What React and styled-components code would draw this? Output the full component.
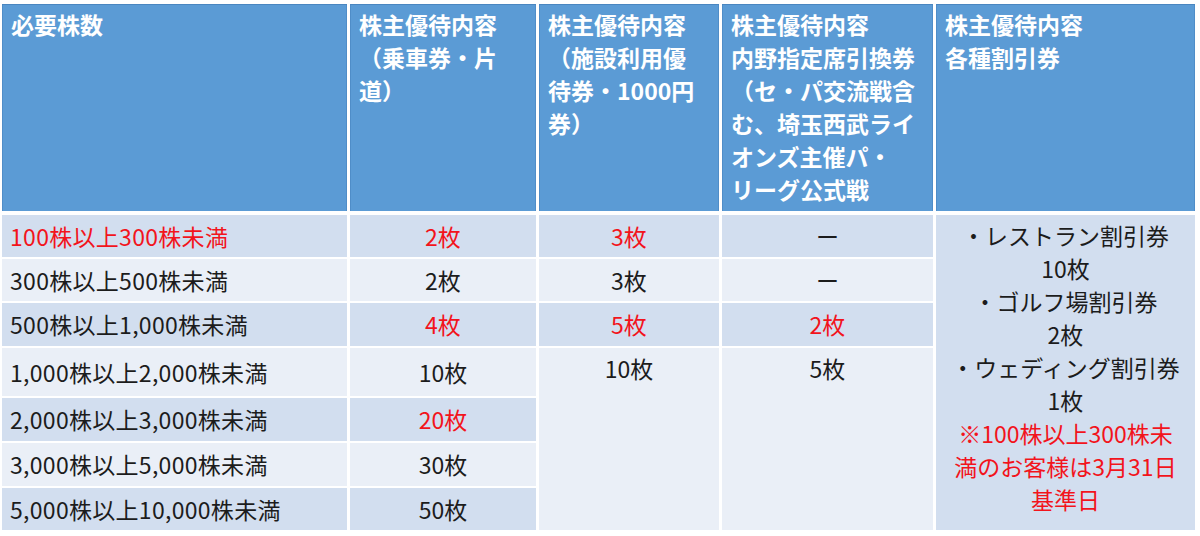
import React from 'react';
import styled, { createGlobalStyle } from 'styled-components';

const GlobalStyle = createGlobalStyle`
  body {
    margin: 0;
    background: #fff;
    font-family: "Noto Sans CJK JP", "Noto Sans", sans-serif;
  }
`;

const COLUMNS = '345px 186px 180px 211px 259px';

const Page = styled.div`
  display: flex;
  flex-direction: column;
  gap: 4px;
  padding: 4px 0 0 2px;
`;

const HeadRow = styled.div`
  display: grid;
  grid-template-columns: ${COLUMNS};
  column-gap: 3px;
  height: 207px;
`;

const HeadCell = styled.div`
  background: #5b9bd5;
  color: #fff;
  font-weight: 700;
  font-size: 23px;
  line-height: 33px;
  padding: 4px 10px 0 9px;
  box-shadow: inset 0 1px 0 #4a86c0, inset 1px 0 0 #4f8dc8, inset -1px 0 0 #4f8dc8;
`;

const Line = styled.span`
  display: block;
  white-space: nowrap;
`;

const Body = styled.div`
  display: grid;
  grid-template-columns: ${COLUMNS};
  grid-template-rows: 42px 42px 43px 48px 43px 43px 42px;
  column-gap: 3px;
  row-gap: 2px;
`;

const Cell = styled.div`
  grid-column: ${(p) => p.$col};
  grid-row: ${(p) => p.$row} / span ${(p) => p.$span || 1};
  background: ${(p) => (p.$dark ? '#d2deef' : '#eaeff7')};
  color: ${(p) => (p.$red ? '#f2141c' : '#1c1c1c')};
  font-size: 23px;
  line-height: 33px;
  letter-spacing: ${(p) => (p.$left ? '0.3px' : '0')};
  display: flex;
  flex-direction: column;
  align-items: ${(p) => (p.$left ? 'flex-start' : 'center')};
  justify-content: ${(p) => (p.$top ? 'flex-start' : 'center')};
  padding: ${(p) => (p.$top ? '4px 0 0' : '0')} ${(p) => (p.$left ? '8px' : '0')};
  white-space: nowrap;
`;

const Note = styled.span`
  display: block;
  text-align: center;
  color: ${(p) => (p.$red ? '#f2141c' : '#1c1c1c')};
`;

const heads = [
  ['必要株数'],
  ['株主優待内容', '（乗車券・片', '道）'],
  ['株主優待内容', '（施設利用優', '待券・1000円', '券）'],
  ['株主優待内容', '内野指定席引換券', '（セ・パ交流戦含', 'む、埼玉西武ライ', 'オンズ主催パ・', 'リーグ公式戦'],
  ['株主優待内容', '各種割引券'],
];

const rows = [
  { shares: '100株以上300株未満', ticket: '2枚', red: true, ticketRed: true },
  { shares: '300株以上500株未満', ticket: '2枚' },
  { shares: '500株以上1,000株未満', ticket: '4枚', ticketRed: true },
  { shares: '1,000株以上2,000株未満', ticket: '10枚' },
  { shares: '2,000株以上3,000株未満', ticket: '20枚', ticketRed: true },
  { shares: '3,000株以上5,000株未満', ticket: '30枚' },
  { shares: '5,000株以上10,000株未満', ticket: '50枚' },
];

const facility = [
  { value: '3枚', red: true },
  { value: '3枚' },
  { value: '5枚', red: true },
];

const baseball = [
  { value: 'ー' },
  { value: 'ー' },
  { value: '2枚', red: true },
];

const coupons = [
  { text: '・レストラン割引券' },
  { text: '10枚' },
  { text: '・ゴルフ場割引券' },
  { text: '2枚' },
  { text: '・ウェディング割引券' },
  { text: '1枚' },
  { text: '※100株以上300株未', red: true },
  { text: '満のお客様は3月31日', red: true },
  { text: '基準日', red: true },
];

export default function App() {
  return (
    <>
      <GlobalStyle />
      <Page>
        <HeadRow>
          {heads.map((lines, i) => (
            <HeadCell key={i}>
              {lines.map((l) => (
                <Line key={l}>{l}</Line>
              ))}
            </HeadCell>
          ))}
        </HeadRow>
        <Body>
          {rows.map((r, i) => (
            <React.Fragment key={r.shares}>
              <Cell $col={1} $row={i + 1} $dark={i % 2 === 0} $red={r.red} $left>
                {r.shares}
              </Cell>
              <Cell $col={2} $row={i + 1} $dark={i % 2 === 0} $red={r.ticketRed}>
                {r.ticket}
              </Cell>
            </React.Fragment>
          ))}
          {facility.map((f, i) => (
            <Cell key={'f' + i} $col={3} $row={i + 1} $dark={i % 2 === 0} $red={f.red}>
              {f.value}
            </Cell>
          ))}
          <Cell $col={3} $row={4} $span={4} $top>
            10枚
          </Cell>
          {baseball.map((b, i) => (
            <Cell key={'b' + i} $col={4} $row={i + 1} $dark={i % 2 === 0} $red={b.red}>
              {b.value}
            </Cell>
          ))}
          <Cell $col={4} $row={4} $span={4} $top>
            5枚
          </Cell>
          <Cell $col={5} $row={1} $span={7} $dark $top>
            {coupons.map((c) => (
              <Note key={c.text} $red={c.red}>
                {c.text}
              </Note>
            ))}
          </Cell>
        </Body>
      </Page>
    </>
  );
}
